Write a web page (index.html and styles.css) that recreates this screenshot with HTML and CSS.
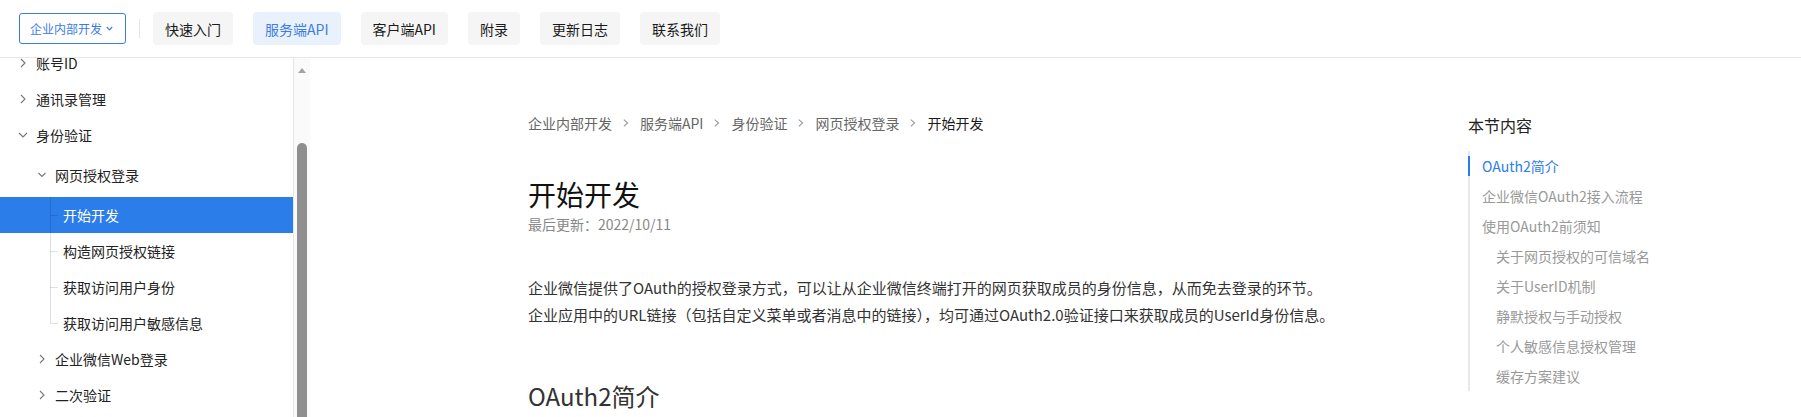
FILE: index.html
```html
<!DOCTYPE html>
<html lang="zh-CN">
<head>
    <meta charset="UTF-8">
    <meta name="viewport" content="width=device-width, initial-scale=1.0">
    <title>开始开发 - 企业微信开发者中心</title>
    <link rel="stylesheet" href="styles.css">
</head>
<body>
    <header class="topbar">
        <button class="scope">企业内部开发<svg class="scope-arrow" width="7" height="5" viewBox="0 0 7 5"><polyline points="0.8,1 3.5,3.8 6.2,1" /></svg></button>
        <span class="divider"></span>
        <nav class="tabs">
            <a class="tab">快速入门</a>
            <a class="tab active">服务端API</a>
            <a class="tab">客户端API</a>
            <a class="tab">附录</a>
            <a class="tab">更新日志</a>
            <a class="tab">联系我们</a>
        </nav>
    </header>

    <div class="layout">
        <aside class="sidebar">
            <ul class="menu">
                <li class="row lv1"><svg class="arrow" width="16" height="10" viewBox="0 0 16 10"><polyline points="6,1 10,5 6,9" /></svg><span>账号ID</span></li>
                <li class="row lv1"><svg class="arrow" width="16" height="10" viewBox="0 0 16 10"><polyline points="6,1 10,5 6,9" /></svg><span>通讯录管理</span></li>
                <li class="row lv1"><svg class="arrow" width="16" height="10" viewBox="0 0 16 10"><polyline points="4,3 8,7 12,3" /></svg><span>身份验证</span></li>
                <li class="group">
                    <ul class="sub">
                        <li class="row lv2"><svg class="arrow" width="16" height="10" viewBox="0 0 16 10"><polyline points="4.5,3 8,6.5 11.5,3" /></svg><span>网页授权登录</span></li>
                        <li class="group">
                            <ul class="leaves">
                                <li class="row lv3 current">开始开发</li>
                                <li class="row lv3">构造网页授权链接</li>
                                <li class="row lv3">获取访问用户身份</li>
                                <li class="row lv3">获取访问用户敏感信息</li>
                            </ul>
                        </li>
                        <li class="row lv2"><svg class="arrow" width="16" height="10" viewBox="0 0 16 10"><polyline points="6,1 10,5 6,9" /></svg><span>企业微信Web登录</span></li>
                        <li class="row lv2"><svg class="arrow" width="16" height="10" viewBox="0 0 16 10"><polyline points="6,1 10,5 6,9" /></svg><span>二次验证</span></li>
                    </ul>
                </li>
            </ul>
        </aside>
        <div class="scrollbar">
            <span class="scroll-up"></span>
            <span class="thumb"></span>
        </div>

        <main class="main">
            <article class="doc">
                <div class="crumbs">
                    <span>企业内部开发</span><svg class="sep" width="6" height="8" viewBox="0 0 6 8"><polyline points="0.8,0.6 4.6,4 0.8,7.4" /></svg>
                    <span>服务端API</span><svg class="sep" width="6" height="8" viewBox="0 0 6 8"><polyline points="0.8,0.6 4.6,4 0.8,7.4" /></svg>
                    <span>身份验证</span><svg class="sep" width="6" height="8" viewBox="0 0 6 8"><polyline points="0.8,0.6 4.6,4 0.8,7.4" /></svg>
                    <span>网页授权登录</span><svg class="sep" width="6" height="8" viewBox="0 0 6 8"><polyline points="0.8,0.6 4.6,4 0.8,7.4" /></svg>
                    <span class="here">开始开发</span>
                </div>
                <h1 class="title">开始开发</h1>
                <div class="updated">最后更新：2022/10/11</div>
                <p class="intro">企业微信提供了OAuth的授权登录方式，可以让从企业微信终端打开的网页获取成员的身份信息，从而免去登录的环节。<br>企业应用中的URL链接（包括自定义菜单或者消息中的链接），均可通过OAuth2.0验证接口来获取成员的UserId身份信息。</p>
                <h2 class="section">OAuth2简介</h2>
            </article>

            <aside class="toc">
                <div class="toc-title">本节内容</div>
                <ul class="toc-list">
                    <li class="toc-item on">OAuth2简介</li>
                    <li class="toc-item">企业微信OAuth2接入流程</li>
                    <li class="toc-item">使用OAuth2前须知</li>
                    <li class="toc-item sub-item">关于网页授权的可信域名</li>
                    <li class="toc-item sub-item">关于UserID机制</li>
                    <li class="toc-item sub-item">静默授权与手动授权</li>
                    <li class="toc-item sub-item">个人敏感信息授权管理</li>
                    <li class="toc-item sub-item">缓存方案建议</li>
                </ul>
            </aside>
        </main>
    </div>
</body>
</html>
```

FILE: styles.css
```css
* { box-sizing: border-box; }
body { margin: 0; height: 417px; overflow: hidden; background: #fff; color: #222; font-family: "Noto Sans CJK SC", "Noto Sans", sans-serif; font-size: 14px; }
ul { list-style: none; margin: 0; padding: 0; }

/* top bar */
.topbar { height: 58px; display: flex; align-items: center; padding-left: 19px; border-bottom: 1px solid #e8e8e8; }
.scope { height: 31px; display: flex; align-items: center; padding: 0 12px 0 10px; border: 1px solid #3a7be8; border-radius: 3px; background: #fff; color: #3a7be8; font-family: inherit; font-size: 12px; line-height: 1; }
.scope-arrow { margin-left: 4px; fill: none; stroke: #3a7be8; stroke-width: 1.2; }
.divider { width: 1px; height: 19px; margin: 0 13px; background: #e5e5e5; }
.tabs { display: flex; gap: 20px; }
.tab { height: 33px; padding: 0 12px; display: flex; align-items: center; border-radius: 4px; background: #f5f5f5; color: #1a1a1a; font-size: 14px; }
.tab.active { background: #e9f1fd; color: #3d7de0; }

/* layout */
.layout { display: flex; height: 359px; overflow: hidden; }

.sidebar { width: 294px; flex: 0 0 294px; border-right: 1px solid #e6e6e6; overflow: hidden; }
.menu { margin-top: -13px; }
.row { height: 36px; display: flex; align-items: center; line-height: 20px; color: #222; white-space: nowrap; }
.row span { margin-left: 5px; }
.arrow { flex: 0 0 16px; fill: none; stroke: #777; stroke-width: 1.1; }
.lv1 { padding-left: 15px; }
.lv2 { padding-left: 34px; }
.lv3 { padding-left: 63px; position: relative; }
.sub, .leaves { padding-top: 4px; }
.leaves .row::before { content: ""; position: absolute; left: 50px; top: 0; height: 100%; border-left: 1px solid rgba(0, 0, 0, 0.12); }
.leaves .row:last-child::before { height: 50%; }
.leaves .row::after { content: ""; position: absolute; left: 50px; top: 50%; width: 8px; border-top: 1px solid rgba(0, 0, 0, 0.12); }
.row.current { background: #2b7de9; color: #fff; }

.scrollbar { width: 16px; flex: 0 0 16px; background: #fafafa; display: flex; flex-direction: column; align-items: center; padding-top: 10px; }
.scroll-up { width: 0; height: 0; border-left: 4.5px solid transparent; border-right: 4.5px solid transparent; border-bottom: 5px solid #a3a3a3; }
.thumb { width: 10px; flex: 1; margin-top: 70px; border-radius: 5px 5px 0 0; background: #8f8f8f; }

/* main */
.main { flex: 1; display: flex; overflow: hidden; }
.doc { width: 940px; flex: 0 0 940px; padding: 55px 0 0 218px; }
.crumbs { display: flex; align-items: center; height: 20px; color: #666; font-size: 14px; white-space: nowrap; }
.sep { margin: 0 11px; fill: none; stroke: #999; stroke-width: 1.1; }
.crumbs .here { color: #1a1a1a; }
.title { margin: 41px 0 0; font-size: 28px; font-weight: normal; line-height: 40px; color: #111; }
.updated { font-size: 14px; line-height: 20px; color: #888; }
.intro { margin: 40px 0 0; font-size: 15px; line-height: 27px; color: #333; white-space: nowrap; }
.section { margin: 51px 0 0; font-size: 24px; font-weight: normal; line-height: 34px; color: #333; }

.toc { padding: 55px 0 0 218px; }
.toc-title { font-size: 16px; line-height: 24px; color: #222; }
.toc-list { margin-top: 14px; border-left: 2px solid #e8e8e8; }
.toc-item { position: relative; height: 30px; line-height: 30px; padding-left: 12px; font-size: 14px; color: #999; white-space: nowrap; }
.toc-item.sub-item { padding-left: 26px; }
.toc-item.on { color: #2b7de9; }
.toc-item.on::before { content: ""; position: absolute; left: -2px; top: 5px; width: 2px; height: 20px; background: #2b7de9; }
```
